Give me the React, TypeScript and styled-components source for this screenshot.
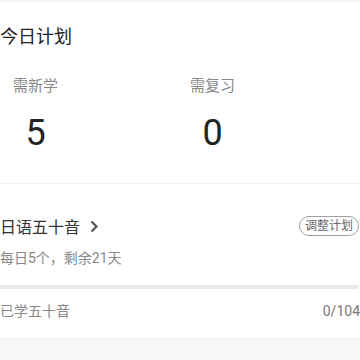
import React from "react";
import styled, { createGlobalStyle } from "styled-components";

const GlobalStyle = createGlobalStyle`
  body {
    margin: 0;
    background: #f7f7f7;
    font-family: Roboto, "Noto Sans CJK SC", sans-serif;
  }
`;

const Page = styled.div`
  padding-top: 3px;
  background: #f7f7f7;
  min-height: 360px;
`;

const Card = styled.section`
  background: #fff;
`;

const PlanBlock = styled.div`
  padding: 22px 0 0;
  border-bottom: 1px solid #f2f2f2;
  height: 158px;
`;

const Title = styled.h2`
  margin: 0;
  font-size: 18px;
  font-weight: 400;
  line-height: 24px;
  color: #222;
`;

const Stats = styled.div`
  display: grid;
  grid-template-columns: 177px 1fr;
  padding-left: 13px;
  margin-top: 27px;
`;

const Stat = styled.div`
  display: inline-flex;
  flex-direction: column;
  align-items: center;
  justify-self: start;
`;

const StatLabel = styled.span`
  font-size: 15px;
  line-height: 20px;
  color: #888;
`;

const StatValue = styled.span`
  font-size: 36px;
  line-height: 40px;
  margin-top: 17px;
  color: #222;
`;

const CourseBlock = styled.div`
  padding: 30px 0 16px;
`;

const CourseRow = styled.div`
  display: flex;
  align-items: center;
  justify-content: space-between;
  height: 24px;
`;

const CourseName = styled.div`
  display: flex;
  align-items: center;
  gap: 9px;
  font-size: 16px;
  color: #333;
`;

const AdjustButton = styled.button`
  font-family: inherit;
  font-size: 12px;
  line-height: 16px;
  color: #666;
  background: #fff;
  border: 1px solid #a0a0a0;
  border-radius: 10px;
  padding: 1px 5px;
  margin-right: 1px;
`;

const SubText = styled.div`
  font-size: 14px;
  color: #888;
  margin-top: 10px;
  line-height: 20px;
`;

const Track = styled.div`
  height: 4px;
  background: #e9e9e9;
  border-radius: 0 2px 2px 0;
  margin: 17px 1px 0 0;
`;

const Fill = styled.div`
  height: 100%;
  background: #4caf50;
  border-radius: 2px;
`;

const ProgressRow = styled.div`
  display: flex;
  justify-content: space-between;
  margin-top: 12px;
  font-size: 14px;
  line-height: 20px;
  color: #888;
`;

const Count = styled.span`
  color: #777;
`;

const Chevron = () => (
  <svg width="10" height="13" viewBox="0 0 10 13">
    <path d="M2.5 1.5 L7.5 6.5 L2.5 11.5" fill="none" stroke="#555" strokeWidth="2.2" />
  </svg>
);

export default function App() {
  const learned = 0;
  const total = 104;
  return (
    <>
      <GlobalStyle />
      <Page>
        <Card>
          <PlanBlock>
            <Title>今日计划</Title>
            <Stats>
              <Stat>
                <StatLabel>需新学</StatLabel>
                <StatValue>5</StatValue>
              </Stat>
              <Stat>
                <StatLabel>需复习</StatLabel>
                <StatValue>0</StatValue>
              </Stat>
            </Stats>
          </PlanBlock>
          <CourseBlock>
            <CourseRow>
              <CourseName>
                日语五十音 <Chevron />
              </CourseName>
              <AdjustButton>调整计划</AdjustButton>
            </CourseRow>
            <SubText>每日5个，剩余21天</SubText>
            <Track>
              <Fill style={{ width: `${(learned / total) * 100}%` }} />
            </Track>
            <ProgressRow>
              <span>已学五十音</span>
              <Count>
                {learned}/{total}
              </Count>
            </ProgressRow>
          </CourseBlock>
        </Card>
      </Page>
    </>
  );
}
